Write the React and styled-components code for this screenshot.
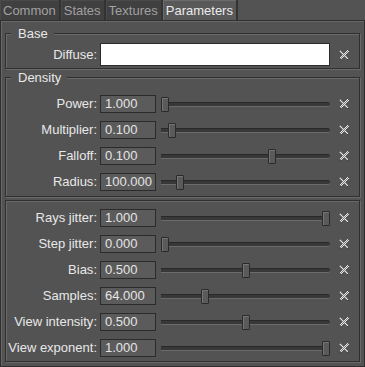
import React from "react";
import styled, { createGlobalStyle } from "styled-components";

const Global = createGlobalStyle`
  html, body { margin: 0; padding: 0; background: #535353; }
  body {
    font-family: "Liberation Sans", Arial, sans-serif;
    font-size: 13px;
    color: #e8e8e8;
  }
`;

const Window = styled.div`
  width: 365px;
  height: 367px;
  display: flex;
  flex-direction: column;
  background: #535353;
  overflow: hidden;
`;

const TabBar = styled.div`
  display: flex;
  height: 20px;
  flex: none;
`;

const Tab = styled.div`
  box-sizing: border-box;
  height: 20px;
  padding: 2px 3px 0;
  line-height: 18px;
  white-space: nowrap;
  background: ${(p) => (p.$active ? "#595959" : "#404040")};
  color: ${(p) => (p.$active ? "#ececec" : "#a0a0a0")};
  border-right: 2px solid #333333;
  box-shadow: ${(p) => (p.$active ? "inset 1px 1px 0 #6c6c6c" : "inset 1px 1px 0 #4a4a4a")};
`;

const Panel = styled.div`
  flex: 1;
  display: flex;
  flex-direction: column;
  border: 1px solid #2f2f2f;
  box-shadow: inset 1px 1px 0 #686868;
  padding: 0 4px;
`;

const Group = styled.div`
  flex: none;
  display: flex;
  flex-direction: column;
  margin-top: ${(p) => p.$mt}px;
  padding: ${(p) => p.$pad};
  border: 1px solid #2f2f2f;
  box-shadow: inset 1px 1px 0 #6a6a6a, 1px 1px 0 #6a6a6a;
`;

const Title = styled.div`
  align-self: flex-start;
  margin: -8px 0 ${(p) => p.$mb}px 5px;
  padding: 0 6px 0 7px;
  line-height: 15px;
  background: #535353;
  color: #e8e8e8;
`;

const Row = styled.div`
  display: flex;
  align-items: center;
  height: ${(p) => p.$h || 26}px;
`;

const Label = styled.div`
  width: 91px;
  margin-right: 3px;
  text-align: right;
  white-space: nowrap;
  line-height: 26px;
  flex: none;
`;

const Field = styled.div`
  box-sizing: border-box;
  flex: none;
  width: ${(p) => p.$w}px;
  height: ${(p) => p.$h}px;
  padding-left: 4px;
  line-height: ${(p) => p.$h - 2}px;
  background: ${(p) => (p.$white ? "#ffffff" : "#5b5b5b")};
  border: 1px solid #2b2b2b;
  color: #e4e4e4;
`;

const SliderBox = styled.div`
  position: relative;
  flex: none;
  width: 169px;
  height: 26px;
  margin-left: 5px;
  display: flex;
  align-items: center;
`;

const Track = styled.div`
  box-sizing: border-box;
  width: 100%;
  height: 5px;
  margin-top: 1px;
  background: #383838;
  border-top: 1px solid #292929;
  border-bottom: 1px solid #6b6b6b;
  border-radius: 0 3px 3px 0;
`;

const Handle = styled.div`
  position: absolute;
  top: 6px;
  box-sizing: border-box;
  width: 8px;
  height: 15px;
  background: #5a5a5a;
  border: 1px solid #2a2a2a;
  border-radius: 1px;
  box-shadow: inset 1px 1px 0 #747474;
`;

const Clear = styled.div`
  flex: 1;
  display: flex;
  justify-content: center;
  align-items: center;
  padding-right: 1px;
`;

const XIcon = () => (
  <svg width="10" height="10" viewBox="0 0 10 10" shapeRendering="crispEdges">
    <defs>
      <pattern id="chk" width="2" height="2" patternUnits="userSpaceOnUse">
        <rect width="2" height="2" fill="#e2e2e2" />
        <rect x="1" y="0" width="1" height="1" fill="#7e7e7e" />
        <rect x="0" y="1" width="1" height="1" fill="#7e7e7e" />
      </pattern>
    </defs>
    <path d="M1.5 2 L9 9.5 M8.5 2 L1 9.5" stroke="#404040" strokeWidth="1.6" />
    <path d="M1 1 L9 9 M9 1 L1 9" stroke="url(#chk)" strokeWidth="2.2" />
  </svg>
);

const SliderRow = ({ label, value, frac }) => (
  <Row>
    <Label>{label}:</Label>
    <Field $w={56} $h={18}>{value}</Field>
    <SliderBox>
      <Track />
      <Handle style={{ left: Math.round(frac * (169 - 8)) }} />
    </SliderBox>
    <Clear>
      <XIcon />
    </Clear>
  </Row>
);

const density = [
  ["Power", "1.000", 0],
  ["Multiplier", "0.100", 0.045],
  ["Falloff", "0.100", 0.665],
  ["Radius", "100.000", 0.095],
];

const rays = [
  ["Rays jitter", "1.000", 1],
  ["Step jitter", "0.000", 0],
  ["Bias", "0.500", 0.503],
  ["Samples", "64.000", 0.25],
  ["View intensity", "0.500", 0.503],
  ["View exponent", "1.000", 1],
];

export default function App() {
  return (
    <Window>
      <Global />
      <TabBar>
        <Tab>Common</Tab>
        <Tab>States</Tab>
        <Tab>Textures</Tab>
        <Tab $active>Parameters</Tab>
      </TabBar>
      <Panel>
        <Group $mt={12} $pad="0 0 2px 0">
          <Title $mb={2}>Base</Title>
          <Row $h={23}>
            <Label>Diffuse:</Label>
            <Field $w={230} $h={23} $white />
            <Clear>
              <XIcon />
            </Clear>
          </Row>
        </Group>
        <Group $mt={8} $pad="0 0 1px 0">
          <Title $mb={6}>Density</Title>
          {density.map(([l, v, f]) => (
            <SliderRow key={l} label={l} value={v} frac={f} />
          ))}
        </Group>
        <Group $mt={3} $pad="4px 0 0 0">
          {rays.map(([l, v, f]) => (
            <SliderRow key={l} label={l} value={v} frac={f} />
          ))}
        </Group>
      </Panel>
    </Window>
  );
}
